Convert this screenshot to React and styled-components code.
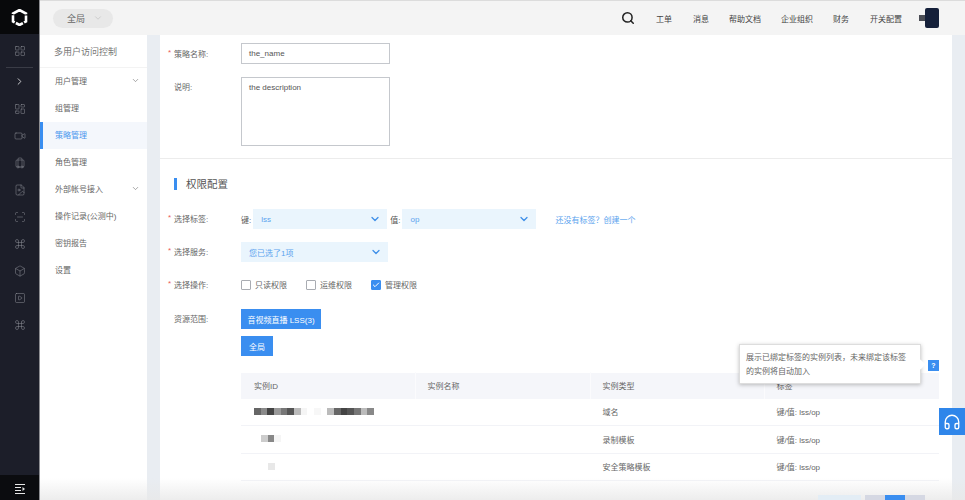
import React from 'react';
import styled, { createGlobalStyle } from 'styled-components';
import { ChevronDown, ChevronRight, Search, LayoutGrid, LayoutDashboard, Video, Luggage, FileImage, ScanLine, Command, Box, SquarePlay, Check, Headphones } from 'lucide-react';

const Global = createGlobalStyle`
  html, body { margin: 0; padding: 0; width: 100%; height: 500px; overflow: hidden; background: #fff; }
  body, input, textarea, button { font-family: "Liberation Sans", "Noto Sans CJK SC", sans-serif; }
  * { box-sizing: border-box; }
`;

const Page = styled.div`
  display: flex; width: 965px; height: 500px; overflow: hidden; position: relative; font-size: 8px; color: #666;
`;
const Rail = styled.aside`
  width: 40px; flex: none; height: 500px; background: #1c1e29; border-right: 1px solid #8d8e92;
  display: flex; flex-direction: column; align-items: center;
`;
const RailLogo = styled.div`
  width: 100%; height: 34px; background: #08090b; display: flex; align-items: center; justify-content: center;
`;
const RailTop = styled.div`
  width: 27px; height: 34px; border-bottom: 1px solid #3a3c46; display: flex; align-items: center; justify-content: center; color: #8e9098;
`;
const RailIcon = styled.div`
  height: 27px; width: 100%; flex: none; display: flex; align-items: center; justify-content: center; color: ${p => p.$light ? '#d5d6d9' : '#8e9098'};
`;
const RailFoot = styled.div`
  margin-top: auto; width: 100%; height: 25px; background: #0b0c0f; display: flex; align-items: center; justify-content: center; padding-top: 3px;
`;
const Right = styled.div`
  flex: 1; min-width: 0; display: flex; flex-direction: column; position: relative;
`;
const Top = styled.header`
  height: 35px; flex: none; background: #f4f4f4; border-top: 1px solid #dcdcdc; display: flex; align-items: center; padding: 0 26px 0 13px;
`;
const Pill = styled.div`
  width: 60px; height: 19px; background: #e8e8e8; border-radius: 10px; display: flex; align-items: center; padding-left: 14px; gap: 8px; font-size: 9px; color: #666;
`;
const TopNav = styled.nav`
  margin-left: auto; display: flex; align-items: center; color: #444;
`;
const TopLink = styled.span`
  font-size: 8px; margin-left: ${p => p.$gap}px;
`;
const Avatar = styled.div`
  margin-left: 17px; display: flex; align-items: center;
`;
const AvatarSmall = styled.div`
  width: 6px; height: 6px; background: #4a4d55;
`;
const AvatarBig = styled.div`
  width: 14px; height: 20px; background: #15203a; border-radius: 2px;
`;
const Body = styled.div`
  flex: 1; min-height: 0; display: flex; background: #e9edf2; overflow: hidden;
`;
const Menu = styled.nav`
  width: 107px; flex: none; background: #fff;
`;
const MenuTitle = styled.div`
  height: 33px; font-size: 9px; color: #777; display: flex; align-items: center; padding-left: 14px; border-bottom: 1px solid #f3f3f3;
`;
const MenuItem = styled.div`
  height: 27px; display: flex; align-items: center; justify-content: space-between; padding: 0 7px 2px ${p => p.$active ? '12px' : '15px'};
  color: ${p => p.$active ? '#4a96ee' : '#666'}; background: ${p => p.$active ? '#f4f7fc' : '#fff'};
  border-left: ${p => p.$active ? '3px solid #3a8ef0' : 'none'};
`;
const Main = styled.main`
  width: 792px; flex: none; margin-left: 13px; background: #fff; padding-top: 8px;
`;
const Row = styled.div`
  display: flex; align-items: ${p => p.$top ? 'flex-start' : 'center'}; padding-left: 8px; margin-bottom: ${p => p.$mb ?? 13}px;
`;
const Label = styled.div`
  width: 73px; flex: none; color: #666; display: flex; gap: 3px; padding-top: ${p => p.$pt ?? 0}px;
  margin-top: ${p => p.$mt ?? -1}px;
`;
const Star = styled.span`
  color: #ec5a5a; width: 3px; display: inline-block;
`;
const TextBox = styled.div`
  width: 149px; height: ${p => p.$h}px; border: 1px solid #c5c8cd; color: #555; padding: ${p => p.$h > 30 ? '5px' : '0'} 7px; display: flex; align-items: ${p => p.$h > 30 ? 'flex-start' : 'center'};
`;
const Divider = styled.div`
  height: 1px; background: #ececec; margin: 12px 0 18px;
`;
const Title = styled.h2`
  margin: 0 0 19px 14px; font-size: 10.5px; font-weight: 400; color: #555; display: flex; align-items: center; gap: 9px; height: 13px;
`;
const TitleBar = styled.span`
  width: 3px; height: 12px; background: #3a8ef0;
`;
const Select = styled.div`
  width: ${p => p.$w}px; height: 20px; background: #eaf5fd; color: #5aa3ee; display: flex; align-items: center; justify-content: space-between; padding: 0 6px 0 8px;
`;
const KeyLabel = styled.span`
  color: #555; margin: 0 ${p => p.$r}px 0 ${p => p.$l}px; white-space: nowrap;
`;
const LinkText = styled.a`
  color: #5aa3ee; margin-left: 19px;
`;
const CheckItem = styled.label`
  width: ${p => p.$w}px; display: flex; align-items: center; gap: 4px; flex: none;
`;
const CheckBox = styled.span`
  width: 10px; height: 10px; border: 1px solid #a9acb2; border-radius: 1px; display: flex; align-items: center; justify-content: center;
  background: ${p => p.$on ? '#3a8ef0' : '#fff'}; border-color: ${p => p.$on ? '#3a8ef0' : '#a9acb2'};
`;
const Blue = styled.button`
  width: ${p => p.$w}px; height: 20px; background: #3a8ef0; color: #fff; border: 0; padding: 0; font-size: 8px;
`;
const Table = styled.div`
  margin: 17px 13px 0 81px; position: relative;
`;
const HeadRow = styled.div`
  display: grid; grid-template-columns: 173.5px 175px 174px 1fr; height: 26px; background: #f5f6fa;
`;
const HeadCell = styled.div`
  padding-left: 13px; display: flex; align-items: center; color: #666; margin-top: -1px; box-shadow: ${p => p.$first ? 'none' : 'inset 1px 0 0 #fbfbfd'};
`;
const DataRow = styled.div`
  display: grid; grid-template-columns: 173.5px 175px 174px 1fr; height: ${p => p.$h}px; border-bottom: 1px solid #f2f3f7;
`;
const Cell = styled.div`
  padding-left: ${p => p.$pl ?? 13}px; display: flex; align-items: center; color: #666; margin-top: -1px;
`;
const Mosaic = styled.div`
  display: flex; margin-top: -1px;
`;
const Tile = styled.span`
  width: 6.67px; height: 7px; background: ${p => p.$c};
`;
const Pager = styled.div`
  display: flex; justify-content: flex-end; margin: 14px 27px 0 0; height: 8px; position: relative; z-index: 3;
`;
const PageBtn = styled.div`
  width: ${p => p.$w}px; margin-left: ${p => p.$ml ?? 0}px; background: ${p => p.$c};
`;
const Tip = styled.div`
  position: absolute; left: 699px; top: 344px; width: 182px; height: 40px; background: #fff; padding: 6px 10px 6px 6px; font-size: 8px; line-height: 14px; color: #666;
  border: 1px solid #ddd; box-shadow: 0 1px 4px rgba(0,0,0,.25); z-index: 3;
  &::after { content: ""; position: absolute; right: -4px; top: 16px; width: 7px; height: 7px; background: #fff; transform: rotate(45deg); }
`;
const Help = styled.div`
  position: absolute; left: 888px; top: 360px; width: 11px; height: 11px; background: #3a8ef0; color: #fff; font-size: 7px; font-weight: 700; display: flex; align-items: center; justify-content: center; z-index: 3;
`;
const Contact = styled.div`
  position: absolute; right: 0; top: 408px; width: 26px; height: 27px; background: #2f86ea; color: #fff; display: flex; align-items: center; justify-content: center; z-index: 3;
`;
const Fade = styled.div`
  position: absolute; left: 0; right: 0; bottom: 0; height: 22px; background: linear-gradient(rgba(236,236,236,0), rgba(232,232,232,.8)); z-index: 2; pointer-events: none;
`;

const railIcons = [LayoutDashboard, Video, Luggage, FileImage, ScanLine, Command, Box, SquarePlay, Command];
const menu = [['用户管理', true], ['组管理'], ['策略管理', false, true], ['角色管理'], ['外部帐号接入', true], ['操作记录(公测中)'], ['密钥报告'], ['设置']];
const rows = [
  { h: 27, pad: 13, tiles: ['#666','#8a8a8a','#444','#999','#777','#555','#bbb','#f5f5f5','#fff','#f7f7f7','#fff','#bbb','#666','#444','#555','#777','#bbb','#888'], type: '域名' },
  { h: 28, pad: 20, tiles: ['#ccc','#888','#f5f5f5'], type: '录制模板' },
  { h: 27, pad: 27, tiles: ['#e8e8e8'], type: '安全策略模板' },
];

const Logo = () => (
  <svg width="17" height="17" viewBox="0 0 17 17">
    <path d="M8.5 1 15 4.6v7.8L8.5 16 2 12.4V4.6z" fill="none" stroke="#fff" strokeWidth="2.6" strokeDasharray="8 1.4" />
  </svg>
);
const FootIcon = () => (
  <svg width="10" height="10" viewBox="0 0 10 10" stroke="#e6e6e6" strokeWidth="1" fill="#e6e6e6">
    <path d="M0 .5h10M0 3.5h6M0 6.5h6M0 9.5h10" fill="none" /><path d="M7.5 3 10 5 7.5 7z" stroke="none" />
  </svg>
);

export default function App() {
  return (
    <Page>
      <Global />
      <Rail>
        <RailLogo><Logo /></RailLogo>
        <RailTop><LayoutGrid size={12} strokeWidth={1} /></RailTop>
        <RailIcon $light><ChevronRight size={11} strokeWidth={2} /></RailIcon>
        {railIcons.map((I, i) => <RailIcon key={i}><I size={12} strokeWidth={1} /></RailIcon>)}
        <RailFoot><FootIcon /></RailFoot>
      </Rail>
      <Right>
        <Top>
          <Pill>全局<ChevronDown size={10} color="#bbb" strokeWidth={1.5} /></Pill>
          <TopNav>
            <Search size={14} color="#222" strokeWidth={2.6} />
            <TopLink $gap={21}>工单</TopLink>
            <TopLink $gap={21}>消息</TopLink>
            <TopLink $gap={20}>帮助文档</TopLink>
            <TopLink $gap={20}>企业组织</TopLink>
            <TopLink $gap={20}>财务</TopLink>
            <TopLink $gap={21}>开关配置</TopLink>
            <Avatar><AvatarSmall /><AvatarBig /></Avatar>
          </TopNav>
        </Top>
        <Body>
          <Menu>
            <MenuTitle>多用户访问控制</MenuTitle>
            {menu.map(([t, arrow, active]) => (
              <MenuItem key={t} $active={active}>{t}{arrow && <ChevronDown size={9} color="#777" strokeWidth={1.7} />}</MenuItem>
            ))}
          </Menu>
          <Main>
            <Row>
              <Label><Star>*</Star>策略名称:</Label>
              <TextBox $h={21}>the_name</TextBox>
            </Row>
            <Row $top $mb={0}>
              <Label $pt={4} $mt={0}><Star />说明:</Label>
              <TextBox $h={69}>the description</TextBox>
            </Row>
            <Divider />
            <Title><TitleBar />权限配置</Title>
            <Row>
              <Label><Star>*</Star>选择标签:</Label>
              <KeyLabel $l={0} $r={2}>键:</KeyLabel>
              <Select $w={134}>lss<ChevronDown size={12} color="#3f8fe8" strokeWidth={2.6} /></Select>
              <KeyLabel $l={3} $r={2}>值:</KeyLabel>
              <Select $w={134}>op<ChevronDown size={12} color="#3f8fe8" strokeWidth={2.6} /></Select>
              <LinkText>还没有标签？创建一个</LinkText>
            </Row>
            <Row $mb={17}>
              <Label><Star>*</Star>选择服务:</Label>
              <Select $w={147}>您已选了1项<ChevronDown size={12} color="#3f8fe8" strokeWidth={2.6} /></Select>
            </Row>
            <Row $mb={19}>
              <Label><Star>*</Star>选择操作:</Label>
              <CheckItem $w={65}><CheckBox />只读权限</CheckItem>
              <CheckItem $w={65}><CheckBox />运维权限</CheckItem>
              <CheckItem $w={65}><CheckBox $on><Check size={8} color="#fff" strokeWidth={3} /></CheckBox>管理权限</CheckItem>
            </Row>
            <Row $mb={7}>
              <Label><Star />资源范围:</Label>
              <Blue $w={80}>音视频直播 LSS(3)</Blue>
            </Row>
            <Row $mb={0}>
              <Label />
              <Blue $w={32}>全局</Blue>
            </Row>
            <Table>
              <HeadRow>
                <HeadCell $first>实例ID</HeadCell>
                <HeadCell>实例名称</HeadCell>
                <HeadCell>实例类型</HeadCell>
                <HeadCell>标签</HeadCell>
              </HeadRow>
              {rows.map(r => (
                <DataRow key={r.type} $h={r.h}>
                  <Cell $pl={r.pad}><Mosaic>{r.tiles.map((c, i) => <Tile key={i} $c={c} />)}</Mosaic></Cell>
                  <Cell />
                  <Cell>{r.type}</Cell>
                  <Cell>键/值: lss/op</Cell>
                </DataRow>
              ))}
            </Table>
            <Pager>
              <PageBtn $w={43} $c="#e3edf5" />
              <PageBtn $w={20} $ml={4} $c="#d5d8e3" />
              <PageBtn $w={20} $c="#3a8ef0" />
              <PageBtn $w={20} $c="#d5d8e3" />
            </Pager>
          </Main>
        </Body>
        <Tip>展示已绑定标签的实例列表，未来绑定该标签的实例将自动加入</Tip>
        <Help>?</Help>
        <Contact><Headphones size={18} strokeWidth={1.8} /></Contact>
        <Fade />
      </Right>
    </Page>
  );
}
